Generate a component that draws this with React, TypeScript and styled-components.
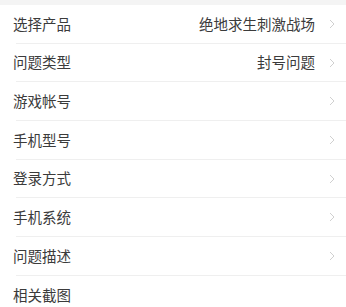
import React from "react";
import styled, { createGlobalStyle } from "styled-components";

const Global = createGlobalStyle`
  html, body { margin: 0; padding: 0; background: #ffffff; }
  body { font-family: "Noto Sans CJK SC", "Noto Sans", sans-serif; }
`;

const Page = styled.div`
  width: 346px;
  background: #ffffff;
`;

const TopStrip = styled.div`
  height: 5px;
  background: #f4f4f4;
`;

const List = styled.ul`
  list-style: none;
  margin: 0;
  padding: 0 0 0 16px;
`;

const Row = styled.li<{ $last?: boolean }>`
  box-sizing: border-box;
  height: 38.7px;
  display: flex;
  align-items: center;
  padding-right: 11px;
  border-bottom: ${(p) => (p.$last ? "none" : "1px solid #efefef")};
`;

const Label = styled.span`
  margin-left: -3px;
  font-size: 14.5px;
  color: #3b3b3b;
  flex: 1;
  line-height: 1;
`;

const Value = styled.span`
  font-size: 14.5px;
  color: #3b3b3b;
  line-height: 1;
  margin-right: 14px;
`;

const Chevron = styled.svg`
  width: 6px;
  height: 10px;
  flex: none;
`;

const items: { label: string; value?: string; arrow: boolean }[] = [
  { label: "选择产品", value: "绝地求生刺激战场", arrow: true },
  { label: "问题类型", value: "封号问题", arrow: true },
  { label: "游戏帐号", arrow: true },
  { label: "手机型号", arrow: true },
  { label: "登录方式", arrow: true },
  { label: "手机系统", arrow: true },
  { label: "问题描述", arrow: true },
  { label: "相关截图", arrow: false },
];

export default function App() {
  return (
    <Page>
      <Global />
      <TopStrip />
      <List>
        {items.map((it, i) => (
          <Row key={it.label} $last={i === items.length - 1}>
            <Label>{it.label}</Label>
            {it.value && <Value>{it.value}</Value>}
            {it.arrow ? (
              <Chevron viewBox="0 0 6 10">
                <path d="M1 1 L5 5 L1 9" fill="none" stroke="#d0d0d0" strokeWidth="1" />
              </Chevron>
            ) : (
              <Chevron as="span" />
            )}
          </Row>
        ))}
      </List>
    </Page>
  );
}
